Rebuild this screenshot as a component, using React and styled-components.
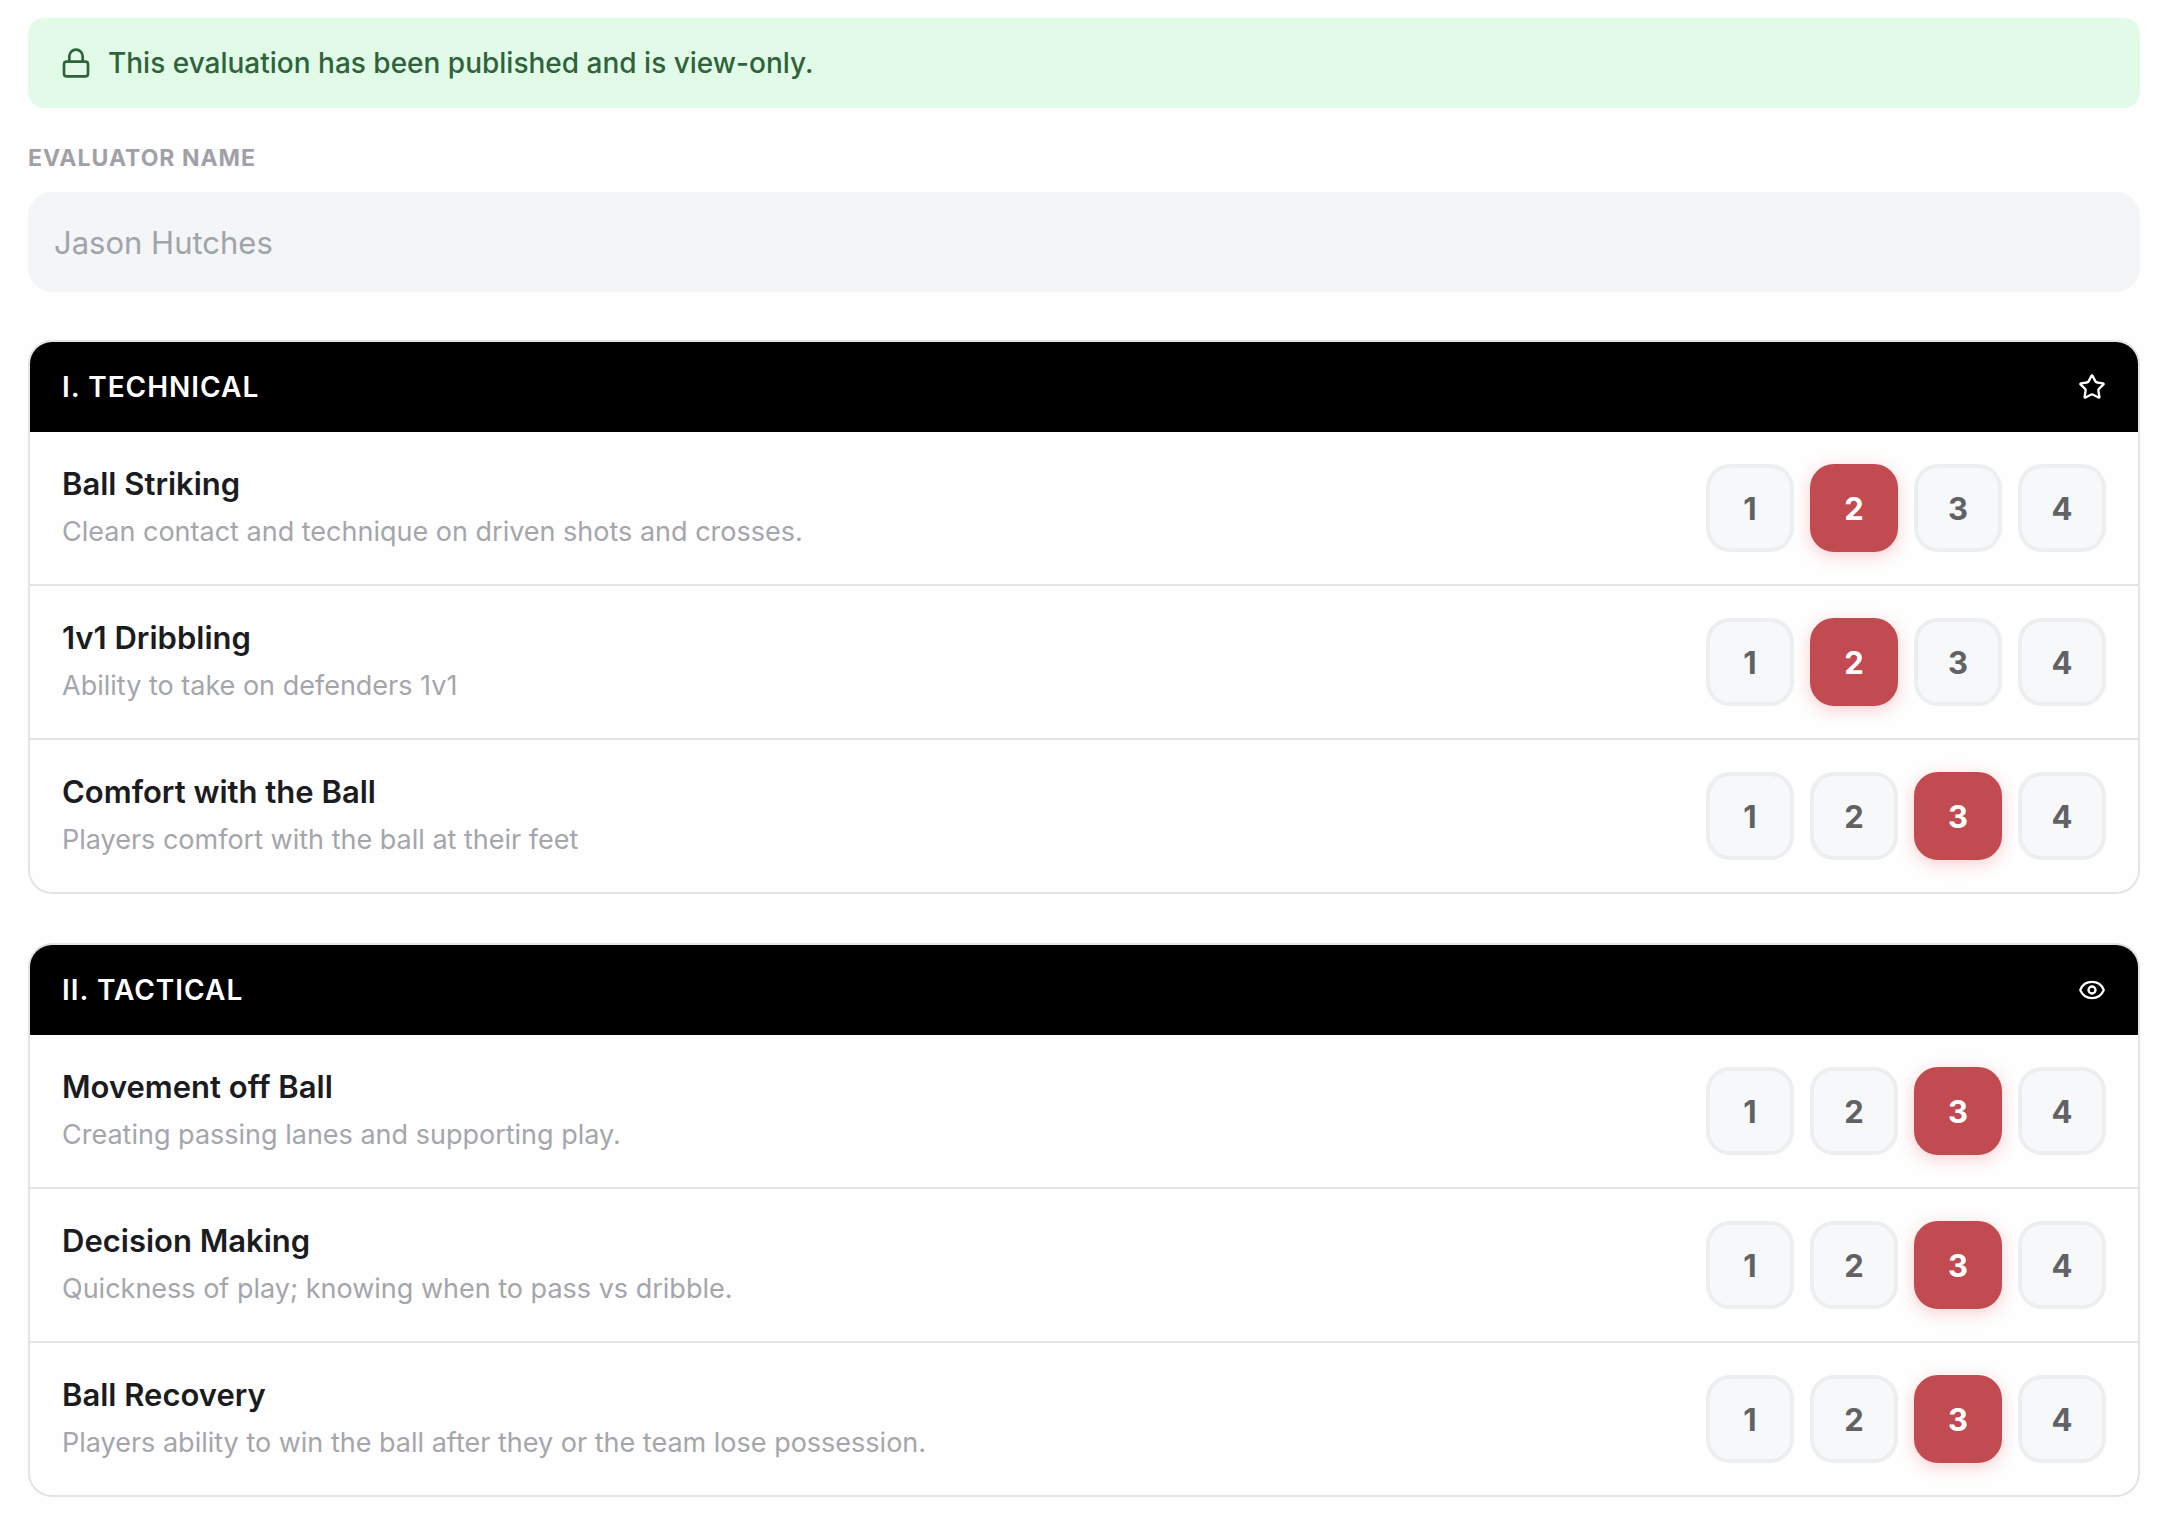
import React, { useState } from "react";
import styled, { createGlobalStyle } from "styled-components";
import { Lock, Star, Eye } from "lucide-react";

const sections = [
  {
    title: "I. Technical",
    icon: Star,
    skills: [
      {
        name: "Ball Striking",
        desc: "Clean contact and technique on driven shots and crosses.",
        score: 2,
      },
      { name: "1v1 Dribbling", desc: "Ability to take on defenders 1v1", score: 2 },
      {
        name: "Comfort with the Ball",
        desc: "Players comfort with the ball at their feet",
        score: 3,
      },
    ],
  },
  {
    title: "II. Tactical",
    icon: Eye,
    skills: [
      {
        name: "Movement off Ball",
        desc: "Creating passing lanes and supporting play.",
        score: 3,
      },
      {
        name: "Decision Making",
        desc: "Quickness of play; knowing when to pass vs dribble.",
        score: 3,
      },
      {
        name: "Ball Recovery",
        desc: "Players ability to win the ball after they or the team lose possession.",
        score: 3,
      },
    ],
  },
];

const scores = [1, 2, 3, 4];

function SkillRow({ skill }) {
  return (
    <Row>
      <SkillText>
        <SkillName>{skill.name}</SkillName>
        <SkillDesc>{skill.desc}</SkillDesc>
      </SkillText>
      <Scores role="group" aria-label={skill.name}>
        {scores.map((n) => (
          <ScoreButton
            key={n}
            type="button"
            disabled
            $active={n === skill.score}
            aria-pressed={n === skill.score}
          >
            {n}
          </ScoreButton>
        ))}
      </Scores>
    </Row>
  );
}

function Section({ section }) {
  const Icon = section.icon;
  return (
    <Card>
      <CardHeader>
        <CardTitle>{section.title}</CardTitle>
        <Icon size={28} strokeWidth={2} aria-hidden="true" />
      </CardHeader>
      {section.skills.map((skill) => (
        <SkillRow key={skill.name} skill={skill} />
      ))}
    </Card>
  );
}

function App() {
  const [evaluator] = useState("Jason Hutches");
  return (
    <>
      <GlobalStyle />
      <Page>
        <Banner role="status">
          <Lock size={32} strokeWidth={2} aria-hidden="true" />
          This evaluation has been published and is view-only.
        </Banner>
        <Field>
          <Label htmlFor="evaluator">Evaluator Name</Label>
          <Input id="evaluator" type="text" value={evaluator} disabled readOnly />
        </Field>
        <Sections>
          {sections.map((section) => (
            <Section key={section.title} section={section} />
          ))}
        </Sections>
      </Page>
    </>
  );
}

export default App;

const GlobalStyle = createGlobalStyle`
  * {
    box-sizing: border-box;
  }
  body {
    margin: 0;
    background: #fefefe;
    color: #1b1c1f;
    font-family: Inter, "Liberation Sans", sans-serif;
  }
  button,
  input {
    font-family: inherit;
  }
`;

const Page = styled.main`
  padding: 18px 32px 40px 28px;
`;

const Banner = styled.div`
  display: flex;
  align-items: center;
  gap: 16px;
  min-height: 90px;
  padding: 0 32px;
  border-radius: 16px;
  background: #e2fbe8;
  color: #2f633b;
  font-size: 28px;
  font-weight: 500;
`;

const Field = styled.div`
  display: flex;
  flex-direction: column;
  gap: 18px;
  margin-top: 34px;
`;

const Label = styled.label`
  color: #a0a1a6;
  font-size: 23px;
  font-weight: 700;
  line-height: 32px;
  letter-spacing: 1px;
  text-transform: uppercase;
`;

const Input = styled.input`
  width: 100%;
  height: 100px;
  padding: 0 26px;
  border: 0;
  border-radius: 24px;
  background: #f3f5f7;
  color: #a0a4aa;
  font-size: 31px;
`;

const Sections = styled.div`
  display: flex;
  flex-direction: column;
  gap: 49px;
  margin-top: 48px;
`;

const Card = styled.section`
  overflow: hidden;
  border: 2px solid #e4e4e5;
  border-radius: 24px;
`;

const CardHeader = styled.header`
  display: flex;
  align-items: center;
  justify-content: space-between;
  min-height: 90px;
  padding: 0 32px;
  background: #000;
  color: #fff;
`;

const CardTitle = styled.h2`
  margin: 0;
  font-size: 28px;
  font-weight: 600;
  letter-spacing: 1px;
  text-transform: uppercase;
`;

const Row = styled.div`
  display: flex;
  align-items: center;
  justify-content: space-between;
  gap: 32px;
  padding: 32px;

  & + & {
    border-top: 2px solid #e4e4e5;
  }
`;

const SkillText = styled.div`
  display: flex;
  flex-direction: column;
  gap: 8px;
`;

const SkillName = styled.h3`
  margin: 0;
  font-size: 31px;
  font-weight: 600;
  line-height: 40px;
`;

const SkillDesc = styled.p`
  margin: 0;
  color: #a4a6ab;
  font-size: 27px;
  line-height: 40px;
`;

const Scores = styled.div`
  display: flex;
  flex-shrink: 0;
  gap: 16px;
`;

const ScoreButton = styled.button`
  width: 88px;
  height: 88px;
  padding: 0;
  border: 4px solid ${(props) => (props.$active ? "#c24a51" : "#edeef0")};
  border-radius: 24px;
  background: ${(props) => (props.$active ? "#c24a51" : "#f6f8fa")};
  box-shadow: ${(props) =>
    props.$active ? "0 4px 16px rgba(239, 68, 68, 0.25)" : "none"};
  color: ${(props) => (props.$active ? "#fff" : "#616265")};
  font-size: 31px;
  font-weight: 700;
`;
